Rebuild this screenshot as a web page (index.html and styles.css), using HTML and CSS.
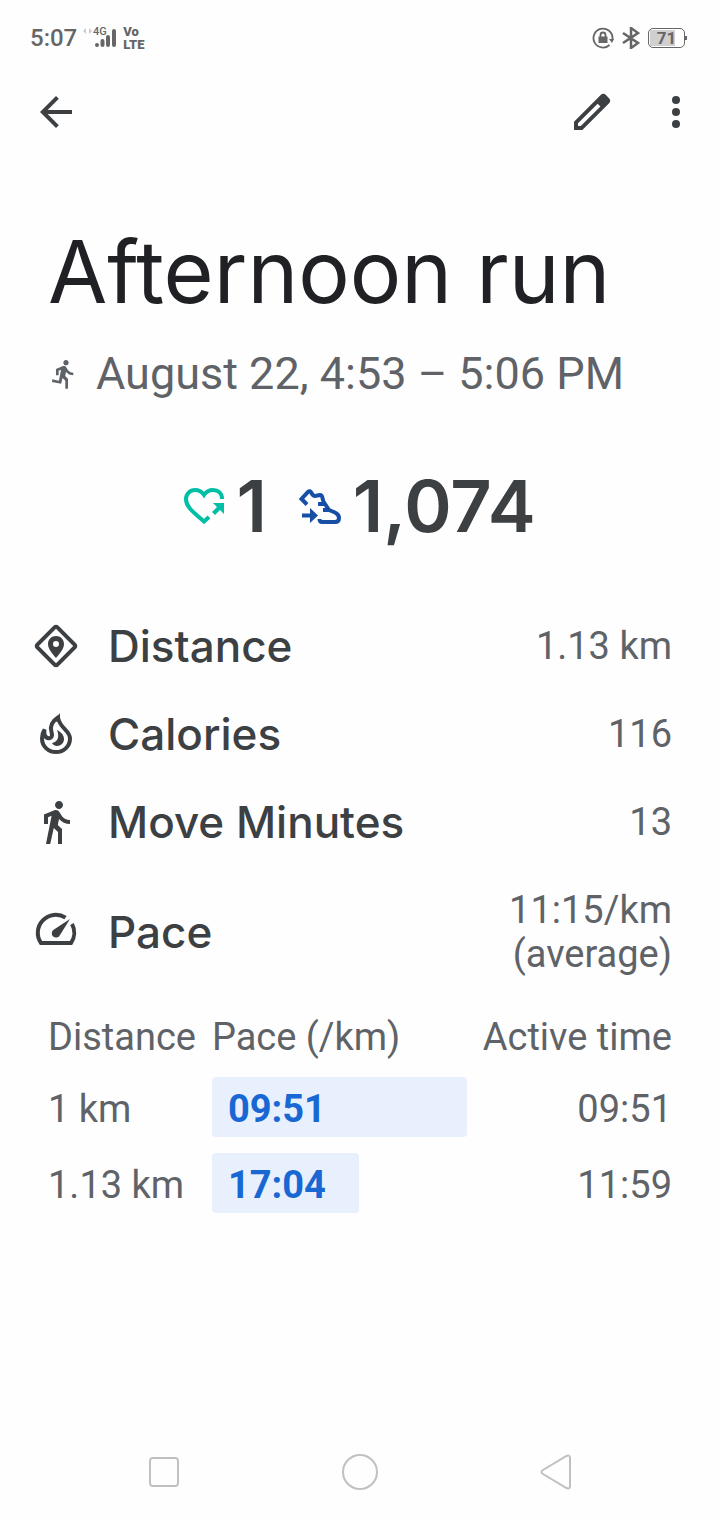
FILE: index.html
```
<!DOCTYPE html>
<html lang="en">
<head>
	<meta charset="UTF-8">
	<meta name="viewport" content="width=device-width,initial-scale=1.0">
	<title>Afternoon run</title>
	<link rel="stylesheet" href="styles.css">
</head>
<body>
	<div class="status">
		<div class="status-side">
			<span class="status-time">5:07</span>
			<svg class="status-signal" width="34" height="24" viewBox="0 0 34 24">
				<path d="M3 2v6L0 5zM6 2v6l3-3z" fill="#ccc"/>
				<text x="10" y="9" class="signal-text">4G</text>
				<path d="M14 19v.1M19.500 15v4M25 11v8M31 5v14" fill="none" stroke="#666" stroke-width="4" stroke-linecap="round"/>
			</svg>
			<span class="status-volte">Vo<br>LTE</span>
		</div>
		<div class="status-side">
			<svg width="22" height="22" viewBox="0 0 22 22">
				<path d="M17.500 18A9.500 9.500 0 1 1 20.500 11v2" fill="none" stroke="#666" stroke-width="1.800"/>
				<path d="M17 12h5l-2 4z" fill="#666"/>
				<path d="M6.500 9.500h9v6.500h-9z" fill="#666"/>
				<path d="M8.500 10V8a2.500 2.500 0 0 1 5 0v2" fill="none" stroke="#666" stroke-width="1.800"/>
			</svg>
			<svg width="18" height="22" viewBox="0 0 18 22">
				<path d="M1 6l15 10-7 5V1l7 5L1 16" fill="none" stroke="#666" stroke-width="2.500"/>
			</svg>
			<span class="battery">71</span>
		</div>
	</div>

	<header class="toolbar">
		<button type="button" class="icon-btn" aria-label="Back">
			<svg width="48" height="48" viewBox="0 0 24 24"><path d="M20 11H7.830l5.590-5.590L12 4l-8 8 8 8 1.410-1.410L7.830 13H20z"/></svg>
		</button>
		<div class="toolbar-actions">
			<button type="button" class="icon-btn" aria-label="Edit">
				<svg width="48" height="48" viewBox="0 0 24 24"><path fill-rule="evenodd" d="M20.410 4.940l-1.350-1.350a2 2 0 0 0-2.830 0L3 16.820V21h4.180L20.410 7.770a2 2 0 0 0 0-2.830zM6.410 19.060L5 19v-1.360l9.820-9.820 1.410 1.410z"/></svg>
			</button>
			<button type="button" class="icon-btn" aria-label="More options">
				<svg width="48" height="48" viewBox="0 0 24 24"><circle cx="12" cy="6" r="2"/><circle cx="12" cy="12" r="2"/><circle cx="12" cy="18" r="2"/></svg>
			</button>
		</div>
	</header>

	<main class="content">
		<h1 class="title">Afternoon run</h1>
		<p class="when">
			<svg width="32" height="32" viewBox="0 0 24 24"><path d="M13.490 5.480c1.100 0 2-.9 2-2s-.9-2-2-2-2 .9-2 2 .9 2 2 2zm-3.600 13.900l1-4.400 2.100 2v6h2v-7.500l-2.100-2 .6-3c1.300 1.500 3.300 2.500 5.500 2.500v-2c-1.900 0-3.500-1-4.300-2.400l-1-1.600c-.4-.6-1-1-1.700-1-.3 0-.5.1-.8.1l-5.200 2.200v4.700h2v-3.400l1.800-.7-1.600 8.100-4.900-1-.4 2 7 1.400z"/></svg>
			<span>August 22, 4:53 – 5:06 PM</span>
		</p>

		<div class="summary">
			<div class="summary-item">
				<svg class="heart" width="40" height="36" viewBox="0 0 40 36">
					<path d="M38 11C38 5 34 2 29 2c-4 0-7 2-9 5-2-3-5-5-9-5C6 2 2 6 2 11c0 8 7 13 18 22.500L25 29" class="line"/>
					<path d="M29 15h11v11l-4-4-5 5-3-3 5-5z"/>
				</svg>
				<span>1</span>
			</div>
			<div class="summary-item">
				<svg class="shoe" width="42" height="35" viewBox="0 0 42 35">
					<path d="M8 15.500L2.500 10 9 3q2-2 3.500 1T16 7l5-1q2 0 2.500 3 .5 4 2.500 6 2 3 4 6l6 2.500q4 2 4 5.500 0 4-4 4H23q-2.500 0-2.500-3M19 15h7M24 21h7" class="line"/>
					<path d="M3 24.500h8V19l8 7.500-8 7.500v-5.500H3z"/>
				</svg>
				<span>1,074</span>
			</div>
		</div>

		<dl class="stats">
			<div class="stat">
				<svg width="48" height="48" viewBox="0 0 48 48">
					<path d="M22.600 5.400q1.400-1.400 2.800 0l17.200 17.200q1.400 1.400 0 2.800L25.400 42.600q-1.400 1.400-2.800 0L5.400 25.400q-1.400-1.400 0-2.800z" class="line"/>
					<path fill-rule="evenodd" d="M24 14c-4.500 0-8 3.500-8 8 0 5 4 9 8 14 4-5 8-9 8-14 0-4.500-3.500-8-8-8zm0 5a3 3 0 1 1 0 6 3 3 0 0 1 0-6z"/>
				</svg>
				<dt>Distance</dt>
				<dd>1.13 km</dd>
			</div>
			<div class="stat">
				<svg width="48" height="48" viewBox="0 0 48 48">
					<path d="M26 7.500C19 12 18 17 19.500 22c1.500 5-1 7-4 6-3-1-3.500-5-3-8.500-2 3-2.500 6-2.500 9C10 36 16 42 24 42s14-6 14-13.500C38 20 28 19 26 7.500z" class="line"/>
					<path d="M25 20c4 2 7 5 7 9 0 4-3 7-7 7-2 0-4-1-5-3 5-1 8-5 5-13z"/>
					<path d="M28 3v8l-6 1z"/>
				</svg>
				<dt>Calories</dt>
				<dd>116</dd>
			</div>
			<div class="stat">
				<svg width="48" height="48" viewBox="0 0 24 24"><path d="M13.500 5.500c1.100 0 2-.9 2-2s-.9-2-2-2-2 .9-2 2 .9 2 2 2zM9.800 8.900L7 23h2.100l1.800-8 2.100 2v6h2v-7.500l-2.100-2 .6-3C14.800 12 16.800 13 19 13v-2c-1.900 0-3.500-1-4.300-2.400l-1-1.600c-.4-.6-1-1-1.700-1-.3 0-.5.1-.8.1L6 8.300V13h2V9.600l1.800-.7"/></svg>
				<dt>Move Minutes</dt>
				<dd>13</dd>
			</div>
			<div class="stat">
				<svg width="48" height="48" viewBox="0 0 48 48">
					<path d="M33.500 9.600A18 18 0 0 0 9 35h30a18 18 0 0 0 1-19" class="line"/>
					<path d="M38 11L28 27a4.300 4.300 0 1 1-6-5.500z"/>
				</svg>
				<dt>Pace</dt>
				<dd>11:15/km<br>(average)</dd>
			</div>
		</dl>

		<table class="splits">
			<thead>
				<tr><th scope="col">Distance</th><th scope="col">Pace (/km)</th><th scope="col">Active time</th></tr>
			</thead>
			<tbody>
				<tr><td>1 km</td><td><div class="bar" style="width:100%">09:51</div></td><td>09:51</td></tr>
				<tr><td>1.13 km</td><td><div class="bar" style="width:57.700%">17:04</div></td><td>11:59</td></tr>
			</tbody>
		</table>
	</main>

	<nav class="navbar">
		<button type="button" aria-label="Recent apps"><svg width="40" height="40" viewBox="0 0 40 40"><rect x="6" y="6" width="28" height="28" rx="3"/></svg></button>
		<button type="button" aria-label="Home"><svg width="40" height="40" viewBox="0 0 40 40"><circle cx="20" cy="20" r="17"/></svg></button>
		<button type="button" aria-label="Go back"><svg width="40" height="40" viewBox="0 0 40 40"><path d="M7 18L30.500 4q3.500-1.500 3.500 2v28q0 3.500-3.500 2L7 22q-3-2 0-4z"/></svg></button>
	</nav>
</body>
</html>
```
FILE: styles.css
```
*{
	margin:0;padding:0;box-sizing:border-box;
}
body{
	display:flex;flex-direction:column;min-height:100vh;
	background-color:#fefefe;color:#5f6368;
	font-family:Roboto,"Liberation Sans",sans-serif;font-size:38px;line-height:44px;
}
button{
	border:0;background:none;color:inherit;font:inherit;cursor:pointer;
}
svg{
	display:block;flex:none;fill:currentColor;
}
.line{
	fill:none;stroke:currentColor;stroke-width:4;
}

/* status bar */
.status{
	display:flex;justify-content:space-between;align-items:center;
	height:76px;padding:0 35px 0 30px;color:#666;
}
.status-side{
	display:flex;align-items:center;gap:8px;
}
.status-time{
	font-size:24px;font-weight:500;line-height:28px;
}
.status-signal{
	margin:0 -2px;
}
.signal-text{
	font-size:11px;font-weight:500;
}
.status-volte{
	font-size:13px;font-weight:900;line-height:13px;
}
.battery{
	position:relative;width:37px;height:20px;border:1px solid #666;border-radius:5px;
	background:linear-gradient(#d0d0d0,#d0d0d0) 1px 1px/25px 16px no-repeat;
	font-size:17px;font-weight:700;line-height:19px;text-align:center;
}
.battery:after{
	content:"";position:absolute;right:-3px;top:7px;width:2px;height:4px;background-color:#666;
}

/* toolbar */
.toolbar{
	display:flex;justify-content:space-between;align-items:center;
	height:72px;padding:0 20px 0 32px;color:#3c4043;
}
.toolbar-actions{
	display:flex;gap:36px;
}

.content{
	flex:1;padding:68px 48px 0;
}
.title{
	color:#202124;font-family:Inter,Roboto,sans-serif;font-size:86px;font-weight:400;
	line-height:112px;
}
.when{
	display:flex;align-items:center;gap:16px;margin-top:20px;
	font-size:45px;line-height:52px;
}
.summary{
	display:flex;justify-content:center;gap:32px;margin-top:60px;
	color:#3c4043;font-family:Inter,Roboto,sans-serif;font-size:72px;font-weight:600;line-height:92px;
}
.summary-item{
	display:flex;align-items:center;gap:12px;
}
.heart{
	color:#00bfa5;
}
.shoe{
	color:#174ea6;
}

/* stat rows */
.stats{
	margin:50px 0 0 -16px;
}
.stat{
	display:flex;align-items:center;padding:22px 0;color:#3c4043;
}
.stat dt{
	flex:1;margin-left:28px;
	font-family:Inter,Roboto,sans-serif;font-size:44px;font-weight:500;
}
.stat svg{
	margin:-2px 0;
}
.stat dd{
	color:#5f6368;text-align:right;
}

/* splits */
.splits{
	width:100%;margin-top:17px;border-collapse:collapse;white-space:nowrap;
}
.splits th{
	padding:0 16px 2px 0;font-weight:400;text-align:left;
}
.splits td{
	padding:16px 16px 0 0;vertical-align:baseline;
}
.splits th:nth-child(2){
	width:100%;
}
.splits th:last-child,.splits td:last-child{
	padding-right:0;text-align:right;
}
.bar{
	padding:10px 16px 6px;border-radius:4px;background-color:#e8f0fe;
	color:#1967d2;font-weight:700;
}

.navbar{
	display:grid;grid-template-columns:repeat(3,1fr);
	padding:28px 66px;
}
.navbar button{
	display:flex;justify-content:center;
}
.navbar svg{
	fill:none;stroke:#c0c0c0;stroke-width:2;
}
```
